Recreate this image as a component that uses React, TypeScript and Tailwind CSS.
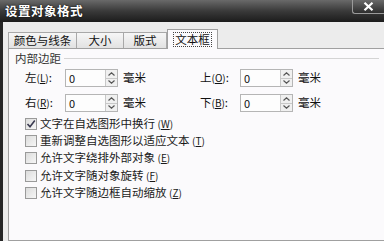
import React from 'react';

const font = { fontFamily: '"Noto Sans CJK SC", "Noto Sans", sans-serif' };

function Key({ k }: { k: string }) {
  return (
    <span className="text-[10px]">
      (<span className="underline">{k}</span>)
    </span>
  );
}

function Spin({ label, k }: { label: string; k: string }) {
  return (
    <div className="flex items-center h-[18px]">
      <span className="w-[40px] text-[11.5px] leading-none">
        {label}
        <Key k={k} />:
      </span>
      <div className="flex h-[18px] w-[53px] border border-[#b5b5b5] bg-[#fdfdfd]">
        <span className="flex-1 pl-[3px] text-[11px] leading-[16px]">0</span>
        <div className="flex w-[12px] flex-col border-l border-[#c8c8c8] bg-[#f0f0f0]">
          <div className="flex flex-1 items-center justify-center border-b border-[#c8c8c8]">
            <svg width="7" height="4" viewBox="0 0 7 4">
              <path d="M0.5 3.5 L3.5 0.8 L6.5 3.5" fill="none" stroke="#555" strokeWidth="1.2" />
            </svg>
          </div>
          <div className="flex flex-1 items-center justify-center">
            <svg width="7" height="4" viewBox="0 0 7 4">
              <path d="M0.5 0.5 L3.5 3.2 L6.5 0.5" fill="none" stroke="#555" strokeWidth="1.2" />
            </svg>
          </div>
        </div>
      </div>
      <span className="ml-[5px] text-[11.5px] leading-none">毫米</span>
    </div>
  );
}

function Check({ text, k, checked }: { text: string; k: string; checked?: boolean }) {
  return (
    <div className="flex h-[17.3px] items-center">
      <div className="flex h-[12px] w-[12px] items-center justify-center border border-[#9a9a9a] bg-gradient-to-br from-[#dcdcdc] to-[#f6f6f6]">
        {checked && (
          <svg width="10" height="10" viewBox="0 0 10 10">
            <path d="M1.5 5 L4 7.8 L8.8 1.5" fill="none" stroke="#3a3a50" strokeWidth="1.6" />
          </svg>
        )}
      </div>
      <span className="ml-[3px] whitespace-nowrap text-[11.5px] leading-none text-[#1a1a1a]">
        {text} <Key k={k} />
      </span>
    </div>
  );
}

export default function App() {
  return (
    <div className="flex h-[241px] w-[384px] flex-col overflow-hidden bg-[#ececec] text-[#111]" style={font}>
      <div className="flex h-[22px] shrink-0 items-start justify-between bg-gradient-to-b from-[#6a6a6a] via-[#3a3a3a] to-[#1c1c1c]">
        <span className="pl-[5px] pt-[3px] text-[12.5px] font-bold leading-[15px] tracking-[0.5px] text-white [text-shadow:0_0_2px_#000]">
          设置对象格式
        </span>
        <div className="flex h-[14px] w-[32px] shrink-0 items-center justify-center rounded-bl-[3px] border border-r-0 border-t-0 border-[#9a9a9a] bg-gradient-to-b from-[#6a6a6a] to-[#2e2e2e]">
          <svg width="11" height="9" viewBox="0 0 11 9">
            <path d="M1.5 0.8 L9.5 8.2 M9.5 0.8 L1.5 8.2" stroke="#ffffff" strokeWidth="2.2" />
          </svg>
        </div>
      </div>
      <div className="flex flex-1">
        <div className="w-[3px] bg-[#262626]" />
        <div className="flex flex-1 flex-col pl-[5px] pt-[7px]">
          <div className="flex h-[19px] items-end text-[11.5px]">
            <div className="flex h-[16px] w-[69px] items-center justify-center border border-b-0 border-[#a8a8a8] bg-gradient-to-b from-[#f6f6f6] to-[#e2e2e2]">
              颜色与线条
            </div>
            <div className="flex h-[16px] w-[47px] items-center justify-center border border-b-0 border-l-0 border-[#a8a8a8] bg-gradient-to-b from-[#f6f6f6] to-[#e2e2e2]">
              大小
            </div>
            <div className="flex h-[16px] w-[43px] items-center justify-center border border-b-0 border-l-0 border-[#a8a8a8] bg-gradient-to-b from-[#f6f6f6] to-[#e2e2e2]">
              版式
            </div>
            <div className="relative z-10 mb-[-1px] flex h-[20px] w-[51px] items-center justify-center border border-b-0 border-[#a0a0a0] bg-[#fbfafc]">
              <span className="border border-dotted border-[#444] px-[1px] leading-[13px]">文本框</span>
            </div>
          </div>
          <div className="mr-[-4px] flex-1 border border-[#a0a0a0] bg-[#fbfafc] pl-[16px] pt-[2px]">
            <div className="flex items-center">
              <span className="ml-[-10px] text-[11.5px] leading-[14px] text-[#333]">内部边距</span>
              <div className="ml-[3px] mr-[8px] h-px flex-1 bg-[#d4d4d4]" />
            </div>
            <div className="mt-[4px] grid grid-cols-[175px_1fr] gap-y-[7px]">
              <Spin label="左" k="L" />
              <Spin label="上" k="O" />
              <Spin label="右" k="R" />
              <Spin label="下" k="B" />
            </div>
            <div className="mt-[3px] flex flex-col">
              <Check text="文字在自选图形中换行" k="W" checked />
              <Check text="重新调整自选图形以适应文本" k="T" />
              <Check text="允许文字绕排外部对象" k="E" />
              <Check text="允许文字随对象旋转" k="F" />
              <Check text="允许文字随边框自动缩放" k="Z" />
            </div>
          </div>
        </div>
      </div>
    </div>
  );
}
